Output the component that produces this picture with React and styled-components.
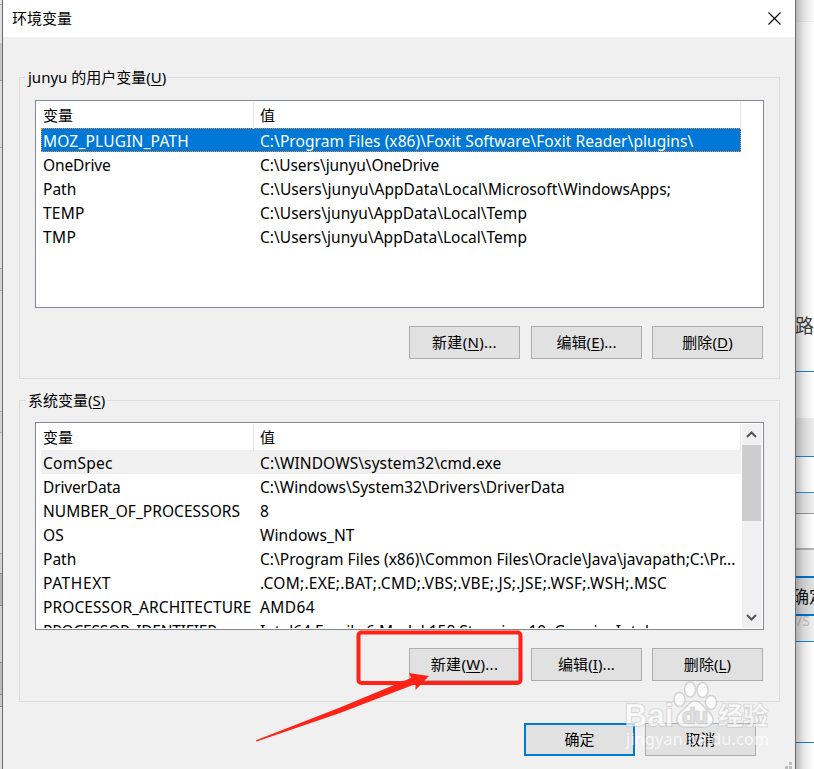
import styled, { createGlobalStyle } from 'styled-components'

const GlobalStyle = createGlobalStyle`
  * {
    box-sizing: border-box;
  }
  body {
    margin: 0;
    overflow: hidden;
    font-family: 'Noto Sans', 'Noto Sans CJK SC', sans-serif;
    font-size: 15px;
    color: #000;
  }
`

const Desktop = styled.div`
  position: relative;
  width: 814px;
  height: 769px;
  display: grid;
  grid-template-columns: 2px 794px 18px;
  overflow: hidden;
  background: #fff;
`

const Strip = styled.div`
  position: relative;
  display: flex;
  flex-direction: column;
  overflow: hidden;
`

const Band = styled.div`
  flex: none;
  height: ${(props) => props.$h}px;
  background: ${(props) => props.$bg || '#fff'};
  border-bottom: ${(props) => props.$line || 'none'};
  white-space: nowrap;
`

const Shade = styled.div`
  position: absolute;
  inset: 0;
  background: linear-gradient(
    to right,
    rgba(0, 0, 0, 0.27),
    rgba(0, 0, 0, 0.11) 40%,
    rgba(0, 0, 0, 0.02) 85%,
    transparent
  );
`

const RoadText = styled.span`
  display: block;
  margin-left: -1px;
  padding-top: 4px;
  font-size: 19px;
  line-height: 26px;
  color: #444;
`

const ConfirmText = styled.span`
  display: block;
  margin-left: -4px;
  font-size: 17px;
  line-height: 38px;
  color: #111;
`

const FaintText = styled.span`
  display: block;
  margin-left: 1px;
  font-size: 14px;
  line-height: 10px;
  color: #c6c6c6;
`

const Dialog = styled.main`
  display: flex;
  flex-direction: column;
  background: #f0f0f0;
  border: solid #6b6b6b;
  border-width: 0 1px;
`

const TitleBar = styled.header`
  flex: none;
  height: 37px;
  padding: 0 14px 0 9px;
  display: flex;
  align-items: center;
  justify-content: space-between;
  background: #fff;
  line-height: 37px;
`

const Content = styled.div`
  padding: 40px 15px 0 16px;
  display: flex;
  flex-direction: column;
  gap: 21px;
`

const Group = styled.section`
  height: 302px;
  border: 1px solid #dcdcdc;
  padding: 0 15px;
  display: flex;
  flex-direction: column;
`

const GroupTitle = styled.h2`
  flex: none;
  align-self: flex-start;
  margin: -12px 0 0 -9px;
  padding: 0 2px;
  height: 22px;
  line-height: 22px;
  font-size: 15px;
  font-weight: 400;
  background: #f0f0f0;
`

const Key = styled.span`
  text-decoration: underline;
  text-decoration-thickness: 1px;
  text-underline-offset: 2px;
`

const List = styled.div`
  flex: none;
  margin-top: ${(props) => props.$top}px;
  width: 729px;
  height: 208px;
  border: 1px solid #828790;
  background: #fff;
  padding: 1px 1px 1px 5px;
  display: flex;
  justify-content: space-between;
`

const Table = styled.div`
  width: 700px;
  height: 204px;
  overflow: hidden;
`

const HeadRow = styled.div`
  display: grid;
  grid-template-columns: 213px 487px;
  height: 26px;
  line-height: 27px;
`

const HeadCell = styled.div`
  padding-left: ${(props) => props.$left}px;
  border-right: 1px solid #e5e5e5;
`

const Row = styled.div`
  display: grid;
  grid-template-columns: 217px 481px;
  height: 24px;
  line-height: 24px;
  padding-left: 1px;
  border: 1px ${(props) => (props.$state === 'selected' ? 'dotted #ff8728' : 'solid transparent')};
  background: ${(props) =>
    props.$state === 'selected' ? '#0078d7' : props.$state === 'hot' ? '#f0f0f0' : 'transparent'};
  color: ${(props) => (props.$state === 'selected' ? '#fff' : '#000')};
`

const Cell = styled.span`
  white-space: pre;
  font-size: 15.5px;
  letter-spacing: ${(props) => props.$spacing || 0}px;
`

const ScrollBar = styled.div`
  width: 20px;
  height: 204px;
  display: flex;
  flex-direction: column;
  justify-content: space-between;
  background: #f0f0f0;
`

const ScrollArrow = styled.svg`
  display: block;
  width: 19px;
  height: 21px;
`

const Thumb = styled.div`
  width: 19px;
  height: 76px;
  margin-bottom: 86px;
  background: #cdcdcd;
`

const Buttons = styled.div`
  display: grid;
  grid-template-columns: 122px 121px 111px;
  justify-content: end;
  margin: 18px 1px 0 0;
`

const Button = styled.button`
  width: 111px;
  height: 33px;
  padding: 0 0 2px;
  border: ${(props) => (props.$primary ? '2px solid #0078d7' : '1px solid #adadad')};
  background: #e1e1e1;
  font: inherit;
  letter-spacing: ${(props) => props.$spacing || 0}px;
  color: inherit;
  white-space: nowrap;
`

const Footer = styled.footer`
  display: flex;
  gap: 10px;
  padding: 21px 0 0 521px;
`

const Overlay = styled.svg`
  position: absolute;
  left: 0;
  top: 0;
  pointer-events: none;
`

// name, value, state, letter spacing of the name, letter spacing of the value
const userVars = [
  ['MOZ_PLUGIN_PATH', 'C:\\Program Files (x86)\\Foxit Software\\Foxit Reader\\plugins\\', 'selected', 0.18, 0.06],
  ['OneDrive', 'C:\\Users\\junyu\\OneDrive', '', -0.15, -0.12],
  ['Path', 'C:\\Users\\junyu\\AppData\\Local\\Microsoft\\WindowsApps;', '', 0, 0.08],
  ['TEMP', 'C:\\Users\\junyu\\AppData\\Local\\Temp', '', 0.2, 0.03],
  ['TMP', 'C:\\Users\\junyu\\AppData\\Local\\Temp', '', 0.4, 0.03],
]

const systemVars = [
  ['ComSpec', 'C:\\WINDOWS\\system32\\cmd.exe', 'hot', 0.25, 0.09],
  ['DriverData', 'C:\\Windows\\System32\\Drivers\\DriverData', '', -0.15, 0],
  ['NUMBER_OF_PROCESSORS', '8', '', 0.04, 0],
  ['OS', 'Windows_NT', '', 0.2, 0.1],
  ['Path', 'C:\\Program Files (x86)\\Common Files\\Oracle\\Java\\javapath;C:\\Pr...', '', 0, 0.02],
  ['PATHEXT', '.COM;.EXE;.BAT;.CMD;.VBS;.VBE;.JS;.JSE;.WSF;.WSH;.MSC', '', 0.6, 0.24],
  ['PROCESSOR_ARCHITECTURE', 'AMD64', '', 0.09, 0.4],
  ['PROCESSOR_IDENTIFIER', 'Intel64 Family 6 Model 158 Stepping 10, GenuineIntel', '', -0.2, 0],
]

const VariableList = ({ rows, top, scroll }) => (
  <List $top={top}>
    <Table>
      <HeadRow>
        <HeadCell $left={2}>变量</HeadCell>
        <HeadCell $left={6}>值</HeadCell>
      </HeadRow>
      {rows.map(([name, value, state, nameSpacing, valueSpacing]) => (
        <Row key={name} $state={state}>
          <Cell $spacing={nameSpacing}>{name}</Cell>
          <Cell $spacing={valueSpacing}>{value}</Cell>
        </Row>
      ))}
    </Table>
    {scroll && (
      <ScrollBar>
        <ScrollArrow viewBox="0 0 19 21">
          <path d="M5 13L9.5 8.5l4.5 4.5" fill="none" stroke="#555" strokeWidth="2" />
        </ScrollArrow>
        <Thumb />
        <ScrollArrow viewBox="0 0 19 21">
          <path d="M5 8L9.5 12.5l4.5-4.5" fill="none" stroke="#555" strokeWidth="2" />
        </ScrollArrow>
      </ScrollBar>
    )}
  </List>
)

const VariableButtons = ({ keys }) => (
  <Buttons>
    <Button $spacing={0.3}>
      新建(<Key>{keys[0]}</Key>)...
    </Button>
    <Button $spacing={0.1}>
      编辑(<Key>{keys[1]}</Key>)...
    </Button>
    <Button $spacing={0.1}>
      删除(<Key>{keys[2]}</Key>)
    </Button>
  </Buttons>
)

const Watermark = () => (
  <g fill="#fff" fillOpacity="0.7" stroke="#bdbdbd" strokeOpacity="0.6" strokeWidth="1.5">
    <ellipse cx="679.5" cy="699.5" rx="5.5" ry="7" />
    <ellipse cx="690" cy="689.5" rx="5.5" ry="7.5" />
    <ellipse cx="702.5" cy="690" rx="5.5" ry="7.5" />
    <ellipse cx="711" cy="702.5" rx="5.5" ry="7" />
    <path d="M695 701c-6 0-8 6-12 9-4 3-7 6-6 11 2 8 10 6 18 6s16 2 18-6c1-5-3-8-6-11-4-3-6-9-12-9z" />
    <g fontFamily="'Liberation Sans', sans-serif" fontWeight="700" paintOrder="stroke">
      <text x="624.5" y="726" fontSize="32" textLength="49" lengthAdjust="spacingAndGlyphs">
        Bai
      </text>
      <text
        x="682.5"
        y="723"
        fontSize="20"
        fontWeight="400"
        fill="#e6e6e6"
        strokeWidth="2.5"
        textLength="25"
        lengthAdjust="spacingAndGlyphs"
      >
        du
      </text>
      <text x="718" y="725" fontSize="25" fontFamily="'Noto Sans CJK SC', sans-serif">
        经验
      </text>
    </g>
    <text x="626" y="745" fontSize="16" textLength="143" stroke="none" fillOpacity="0.75">
      jingyan.baidu.com
    </text>
  </g>
)

const App = () => (
  <>
    <GlobalStyle />
    <Desktop>
      <Strip>
        <Band $h={5} $bg="#e4e4e4" $line="1px solid #aaa" />
        <Band $h={38} $bg="#e0e0e0" />
        <Band $h={38} $bg="#c4c4c4" $line="1px solid #999" />
        <Band $h={67} $bg="#dcdcdc" $line="1px solid #aaa" />
        <Band $h={121} $bg="#dcdcdc" $line="1px solid #aaa" />
        <Band $h={22} $bg="#d2d2d2" $line="1px solid #aaa" />
        <Band $h={121} $bg="#dcdcdc" $line="1px solid #aaa" />
        <Band $h={21} $bg="#d2d2d2" $line="1px solid #aaa" />
        <Band $h={121} $bg="#dcdcdc" $line="1px solid #aaa" />
        <Band $h={20} $bg="#d2d2d2" $line="1px solid #888" />
        <Band $h={32} $bg="#b4b4b4" $line="1px solid #888" />
        <Band $h={57} $bg="#d0d0d0" $line="1px solid #888" />
        <Band $h={32} $bg="#bbb" $line="1px solid #888" />
        <Band $h={12} $bg="#c8c8c8" $line="1px solid #888" />
        <Band $h={62} $bg="#dedede" />
      </Strip>
      <Dialog>
        <TitleBar>
          环境变量
          <svg width="13" height="13" viewBox="0 0 13 13">
            <path d="M0.5 0.5l12 12M12.5 0.5l-12 12" stroke="#000" strokeWidth="1.1" />
          </svg>
        </TitleBar>
        <Content>
          <Group>
            <GroupTitle>
              junyu 的用户变量(<Key>U</Key>)
            </GroupTitle>
            <VariableList rows={userVars} top={12} />
            <VariableButtons keys={['N', 'E', 'D']} />
          </Group>
          <Group>
            <GroupTitle>
              系统变量(<Key>S</Key>)
            </GroupTitle>
            <VariableList rows={systemVars} top={11} scroll />
            <VariableButtons keys={['W', 'I', 'L']} />
          </Group>
        </Content>
        <Footer>
          <Button $primary>确定</Button>
          <Button>取消</Button>
        </Footer>
      </Dialog>
      <Strip>
        <Band $h={22} $bg="#fafafa" $line="1px solid #f0f0f0" />
        <Band $h={287} />
        <Band $h={63} $line="1px solid #1a86dc">
          <RoadText>路</RoadText>
        </Band>
        <Band $h={46} />
        <Band $h={39} $bg="#ececec" $line="1px solid #1a86dc" />
        <Band $h={36} $line="1px solid #2b8fe0" />
        <Band $h={21} $bg="#f0f0f0" $line="1px solid #999" />
        <Band $h={36} $line="2px solid #b4b4b4" />
        <Band $h={28} $bg="#f0f0f0" $line="2px solid #0078d7" />
        <Band $h={38} $bg="#e1e1e1" $line="2px solid #0078d7">
          <ConfirmText>确定</ConfirmText>
        </Band>
        <Band $h={26} $bg="#f0f0f0" $line="1px solid #1a86dc">
          <FaintText>/S</FaintText>
        </Band>
        <Band $h={101} $line="1px solid #1a86dc" />
        <Band $h={26} />
        <Shade />
      </Strip>
      <Overlay width="814" height="769" viewBox="0 0 814 769">
        <path d="M789 762h3v3h-3zM785 766h3v3h-3zM789 766h3v3h-3z" fill="#bfbfbf" />
        <Watermark />
        <rect x="358.5" y="632.5" width="162" height="50.5" rx="3" fill="none" stroke="#ff2317" strokeWidth="4" />
        <path d="M256 740.3L340 707.5 411 678 409 673 429 676 415.5 690 415.5 684 340 713 256.5 741.5z" fill="#ff2317" />
      </Overlay>
    </Desktop>
  </>
)

export default App
